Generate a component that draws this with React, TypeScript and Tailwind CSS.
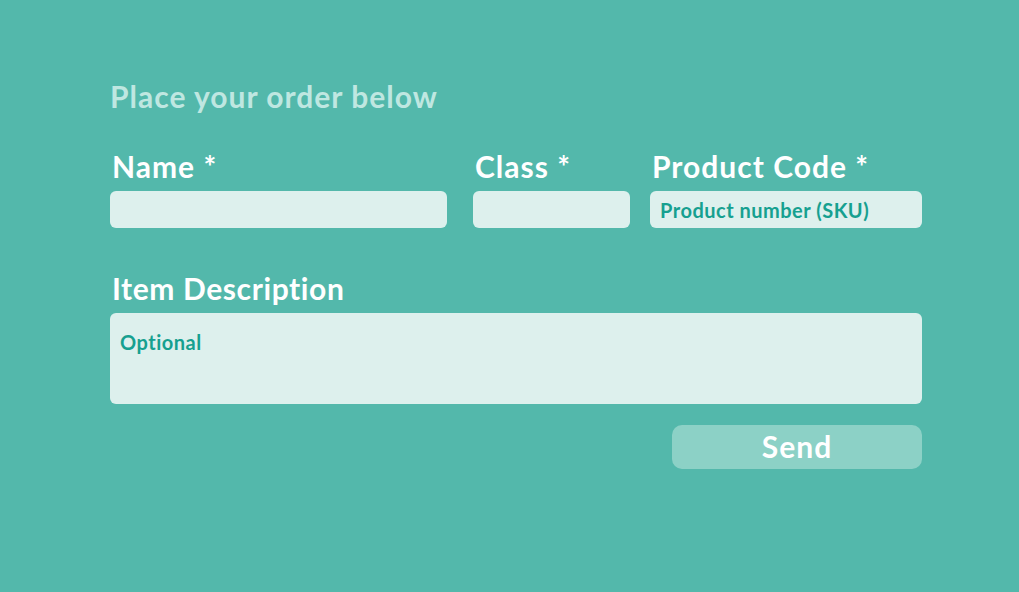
import React from "react";

export default function App() {
  const font = { fontFamily: "Lato, 'Noto Sans', sans-serif" };
  return (
    <div
      className="w-[1019px] h-[592px] bg-[#53b8ab] pt-[78px] pl-[110px] overflow-hidden"
      style={font}
    >
      <div className="w-[812px] flex flex-col">
        <h1 className="text-[30px] leading-[36px] font-bold tracking-[1px] text-[#bfe7e1]">
          Place your order below
        </h1>
        <div className="flex mt-[34px]">
          <div className="w-[337px] flex flex-col">
            <label className="pl-[2px] text-[30px] leading-[36px] font-bold tracking-[1px] text-white">Name *</label>
            <div className="mt-[7px] h-[37px] rounded-[6px] bg-[#ddf0ed]" />
          </div>
          <div className="w-[157px] ml-[26px] flex flex-col">
            <label className="pl-[2px] text-[30px] leading-[36px] font-bold tracking-[1px] text-white">Class *</label>
            <div className="mt-[7px] h-[37px] rounded-[6px] bg-[#ddf0ed]" />
          </div>
          <div className="w-[272px] ml-[20px] flex flex-col">
            <label className="pl-[2px] text-[30px] leading-[36px] font-bold tracking-[1px] text-white whitespace-nowrap">Product Code *</label>
            <div className="mt-[7px] h-[37px] rounded-[6px] bg-[#ddf0ed] flex items-center pl-[10px] text-[20px] font-bold tracking-[0.5px] text-[#16a090] whitespace-nowrap">
              Product number (SKU)
            </div>
          </div>
        </div>
        <label className="mt-[42px] pl-[2px] text-[30px] leading-[36px] font-bold tracking-[0.6px] text-white">
          Item Description
        </label>
        <div className="mt-[7px] h-[91px] rounded-[6px] bg-[#ddf0ed] pl-[10px] pt-[16px] text-[20px] leading-[26px] font-bold tracking-[0.5px] text-[#16a090]">
          Optional
        </div>
        <div className="flex justify-end mt-[21px]">
          <button className="w-[250px] h-[44px] rounded-[10px] bg-[#8cd1c6] text-white text-[30px] leading-none font-bold tracking-[1px] flex items-center justify-center pb-[3px]">
            Send
          </button>
        </div>
      </div>
    </div>
  );
}
